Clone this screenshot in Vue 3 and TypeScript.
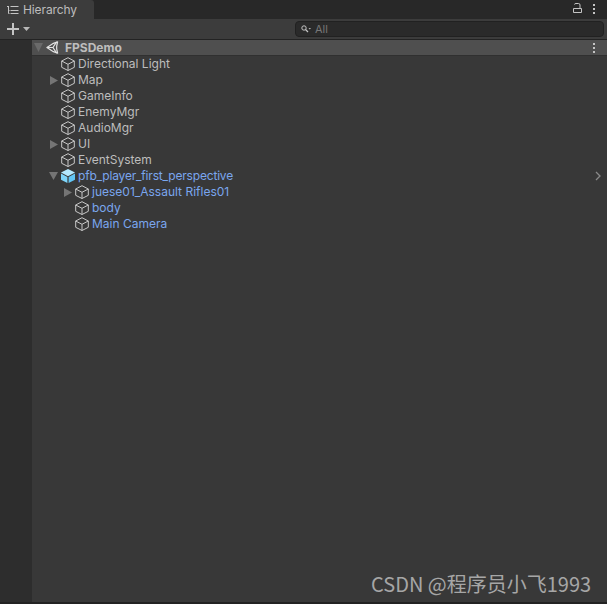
<script setup lang="ts">
interface Row { name: string; depth: number; arrow?: 'right' | 'down'; prefab?: boolean; blue?: boolean }
const rows: Row[] = [
  { name: 'Directional Light', depth: 0 },
  { name: 'Map', depth: 0, arrow: 'right' },
  { name: 'GameInfo', depth: 0 },
  { name: 'EnemyMgr', depth: 0 },
  { name: 'AudioMgr', depth: 0 },
  { name: 'UI', depth: 0, arrow: 'right' },
  { name: 'EventSystem', depth: 0 },
  { name: 'pfb_player_first_perspective', depth: 0, arrow: 'down', prefab: true, blue: true },
  { name: 'juese01_Assault Rifles01', depth: 1, arrow: 'right', blue: true },
  { name: 'body', depth: 1, blue: true },
  { name: 'Main Camera', depth: 1, blue: true },
]
const indent = (d: number) => ({ paddingLeft: `${46 + d * 14}px` })
</script>

<template>
  <div class="window">
    <div class="tabbar">
      <div class="tab">
        <svg class="tab-icon" width="12" height="10" viewBox="0 0 12 10">
          <path d="M0 1.500h2M3.500 1.500h8M3.500 5.500h8M3.500 8.500h8M1.500 2v6.500h1M1.500 5.500h1" stroke="#c4c4c4" stroke-width="1" fill="none" />
        </svg>
        <span class="tab-label">Hierarchy</span>
      </div>
      <div class="tab-actions">
        <svg class="lock" width="9" height="10" viewBox="0 0 9 10">
          <path d="M1.500 1.500Q1.500.5 3 .5h2.500q1.500 0 1.500 1.500v3M.5 5.500h8v4h-8z" stroke="#c4c4c4" stroke-width="1" fill="none" />
        </svg>
        <div class="dots"><i></i><i></i><i></i></div>
      </div>
    </div>
    <div class="toolbar">
      <div class="add">
        <svg width="12" height="12" viewBox="0 0 12 12"><path d="M6 0v12M0 6h12" stroke="#c4c4c4" stroke-width="2" /></svg>
        <svg width="7" height="4" viewBox="0 0 7 4"><path d="M0 0h7L3.500 4z" fill="#b8b8b8" /></svg>
      </div>
      <div class="search">
        <svg width="10" height="8" viewBox="0 0 10 8">
          <circle cx="3" cy="3" r="2.200" stroke="#c4c4c4" fill="none" />
          <path d="M4.500 4.500 7 7" stroke="#c4c4c4" stroke-width="1.200" />
          <path d="M7.500 3h2.500L8.750 4.500z" fill="#b0b0b0" />
        </svg>
        <span>All</span>
      </div>
    </div>
    <div class="body">
      <div class="gutter"></div>
      <div class="content">
        <div class="scene">
          <svg class="scene-arrow" width="9" height="9" viewBox="0 0 9 9"><path d="M0 0h9L4.500 9z" fill="#6a6a6a" /></svg>
          <svg class="unity" width="13" height="13" viewBox="0 0 14 14">
            <path d="M1 7 8 2.500l4.500-1.500-1 4.500 0 3 1 4.500L8 11.500z" stroke="#e2e2e2" stroke-width="1.300" fill="none" stroke-linejoin="round" />
            <path d="M1 7h6.500L11.500 1M7.500 7l4 6" stroke="#e2e2e2" stroke-width="1.300" fill="none" />
          </svg>
          <span class="scene-name">FPSDemo</span>
          <div class="dots scene-dots"><i></i><i></i><i></i></div>
        </div>
        <div v-for="row in rows" :key="row.name" class="row" :style="indent(row.depth)">
          <span class="arrow-slot">
            <svg v-if="row.arrow === 'right'" width="8" height="9" viewBox="0 0 8 9"><path d="M0 0l8 4.500-8 4.500z" fill="#757575" /></svg>
            <svg v-else-if="row.arrow === 'down'" width="9" height="8" viewBox="0 0 9 8"><path d="M0 0h9L4.500 8z" fill="#757575" /></svg>
          </span>
          <svg v-if="row.prefab" class="cube" width="14" height="14" viewBox="0 0 14 14">
            <path d="M7 0 14 3.600 7 7.200 0 3.600z" fill="#b4e9ff" />
            <path d="M0 4.600 6.400 8v6L0 10.700z" fill="#7fd6fb" />
            <path d="M14 4.600 7.600 8v6l6.400-3.300z" fill="#62c6f5" />
          </svg>
          <svg v-else class="cube" width="14" height="14" viewBox="0 0 14 14">
            <path d="M7 .7 13.300 4v6.300L7 13.500.7 10.300V4zM.7 4 7 7.300 13.300 4M7 7.300v6.200" stroke="#c8c8c8" stroke-width="1" fill="none" stroke-linejoin="round" />
          </svg>
          <span class="name" :class="{ blue: row.blue, tight: row.prefab }">{{ row.name }}</span>
          <svg v-if="row.prefab" class="chevron" width="6" height="10" viewBox="0 0 6 10"><path d="M1 1l4 4-4 4" stroke="#8a8a8a" stroke-width="1.300" fill="none" /></svg>
        </div>
      </div>
    </div>
    <div class="bottom-edge"></div>
    <div class="watermark">CSDN @程序员小飞1993</div>
  </div>
</template>

<style>
html, body { margin: 0; background: #383838; }
</style>

<style scoped>
.window {
  position: relative;
  width: 607px;
  height: 604px;
  display: flex;
  flex-direction: column;
  overflow: hidden;
  background: #383838;
  font-family: Inter, "Noto Sans", sans-serif;
  font-size: 12px;
  color: #bdbdbd;
}
.tabbar {
  height: 19px;
  flex: none;
  display: flex;
  justify-content: space-between;
  background: #282828;
}
.tab {
  width: 94px;
  height: 19px;
  box-sizing: border-box;
  padding-left: 7px;
  display: flex;
  align-items: center;
  gap: 4px;
  background: #3c3c3c;
  border-radius: 0 3px 0 0;
}
.tab-icon { flex: none; }
.tab-label { letter-spacing: -0.1px; }
.tab-actions { display: flex; align-items: center; gap: 11px; padding-right: 12px; padding-bottom: 1px; }
.lock { margin-top: -2px; }
.dots { display: flex; flex-direction: column; gap: 2px; }
.dots i { display: block; width: 2px; height: 2px; background: #c4c4c4; }
.toolbar {
  height: 21px;
  flex: none;
  box-sizing: border-box;
  padding: 1px 3px 1px 7px;
  display: flex;
  align-items: center;
  justify-content: space-between;
  background: #3c3c3c;
  border-bottom: 1px solid #232323;
}
.add { display: flex; align-items: center; gap: 4px; }
.search {
  width: 309px;
  height: 16px;
  box-sizing: border-box;
  padding-left: 5px;
  display: flex;
  align-items: center;
  gap: 4px;
  background: #2a2a2a;
  border: 1px solid #212121;
  border-radius: 4px;
  font-size: 11px;
  color: #777;
}
.body { flex: 1; display: flex; min-height: 0; }
.gutter { width: 32px; flex: none; background: #2d2d2d; }
.content { flex: 1; min-width: 0; }
.scene {
  height: 16px;
  box-sizing: border-box;
  display: flex;
  align-items: center;
  padding-left: 2px;
  background: #4f4f4f;
  border-bottom: 1px solid #303030;
}
.scene-arrow { margin-right: 3px; }
.unity { margin-right: 6px; }
.scene-name { font-weight: 700; }
.scene-dots { margin-left: auto; margin-right: 12px; }
.row {
  height: 16px;
  display: flex;
  align-items: center;
  box-sizing: border-box;
  margin-left: -32px;
  padding-bottom: 2px;
}
.arrow-slot {
  width: 15px;
  flex: none;
  display: flex;
  justify-content: center;
  align-items: center;
  margin-top: 2px;
}
.cube { flex: none; margin-right: 3px; margin-top: 2px; }
.name { white-space: nowrap; }
.name.blue { color: #7aa6ee; }
.name.tight { letter-spacing: -0.18px; }
.chevron { margin-left: auto; margin-right: 6px; margin-top: 2px; }
.bottom-edge { height: 2px; flex: none; background: #232323; }
.watermark {
  position: absolute;
  left: 371px;
  top: 570px;
  font-family: "Noto Sans CJK SC", sans-serif;
  font-size: 20px;
  line-height: 28px;
  color: #a6a6a6;
  white-space: nowrap;
}
</style>
